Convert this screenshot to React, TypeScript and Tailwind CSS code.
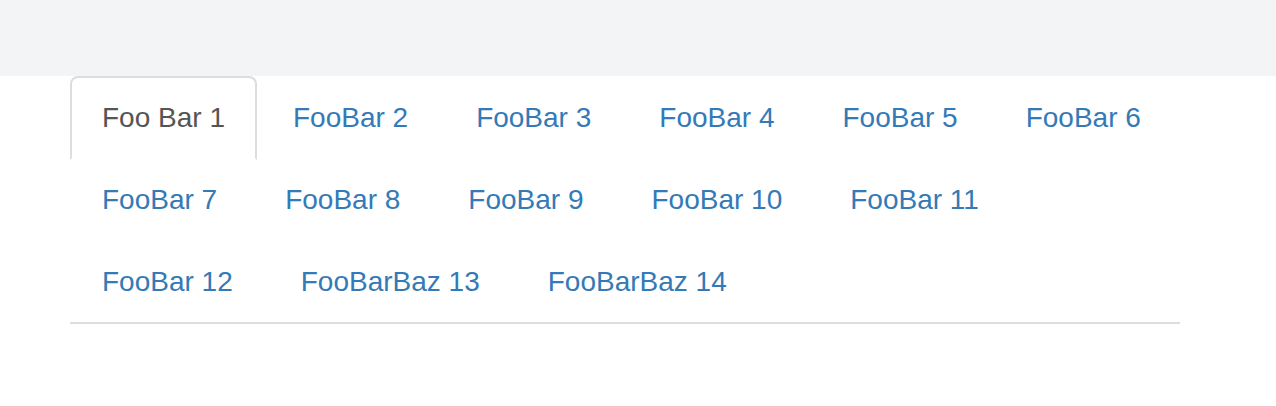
const tabs = [
  "Foo Bar 1",
  "FooBar 2",
  "FooBar 3",
  "FooBar 4",
  "FooBar 5",
  "FooBar 6",
  "FooBar 7",
  "FooBar 8",
  "FooBar 9",
  "FooBar 10",
  "FooBar 11",
  "FooBar 12",
  "FooBarBaz 13",
  "FooBarBaz 14",
];

export default function App() {
  return (
    <div className="min-h-[406px] w-full bg-white font-['Liberation_Sans',Arial,sans-serif]">
      <div className="h-[76px] bg-[#f3f4f6]"></div>
      <ul className="ml-[70px] w-[1110px] flex flex-wrap border-b-2 border-[#dddddd]">
        {tabs.map((label, i) => (
          <li key={label} className="-mb-[2px] mr-[4px]">
            <a
              href="#"
              className={
                i === 0
                  ? "block px-[30px] py-[20px] text-[28px] leading-[40px] rounded-t-[8px] border-2 border-[#dddddd] border-b-transparent bg-white text-[#555555]"
                  : "block px-[30px] py-[20px] text-[28px] leading-[40px] rounded-t-[8px] border-2 border-transparent text-[#337ab7]"
              }
            >
              {label}
            </a>
          </li>
        ))}
      </ul>
    </div>
  );
}
